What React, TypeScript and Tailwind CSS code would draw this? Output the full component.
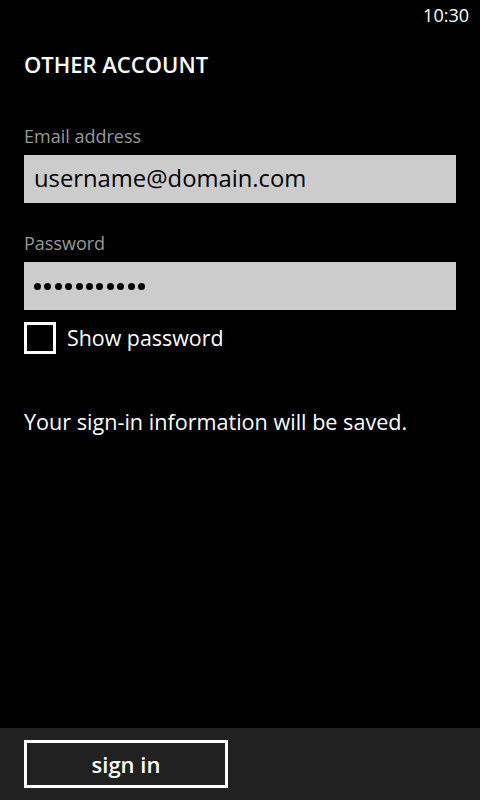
const font = { fontFamily: '"Open Sans", "Noto Sans", sans-serif' };

const Field = ({ label, children, mt }: { label: string; children: React.ReactNode; mt: string }) => (
  <div className={mt}>
    <div className="text-[18px] leading-[18px] text-[#999999]">{label}</div>
    <div className="mt-[10px] h-[48px] bg-[#cccccc] px-[10px] flex items-center text-[23.8px] text-black">
      {children}
    </div>
  </div>
);

export default function App() {
  return (
    <div className="h-[800px] w-[480px] bg-black text-white flex flex-col" style={font}>
      <div className="h-[30px] flex items-center justify-end pr-[11px] text-[18px] leading-none">10:30</div>

      <div className="flex-1 px-[24px]">
        <h1 className="mt-[23px] text-[22px] leading-[22px] font-semibold">OTHER ACCOUNT</h1>

        <Field label="Email address" mt="mt-[52px]">username@domain.com</Field>
        <Field label="Password" mt="mt-[31px]">
          <div className="flex gap-[3.4px]">
            {Array.from({ length: 11 }).map((_, i) => (
              <span key={i} className="w-[7px] h-[7px] rounded-full bg-black" />
            ))}
          </div>
        </Field>

        <label className="mt-[12px] flex items-center gap-[11px]">
          <span className="w-[32px] h-[32px] border-[3px] border-white" />
          <span className="text-[21.4px] leading-none">Show password</span>
        </label>

        <p className="mt-[57px] text-[21.6px] leading-none">Your sign-in information will be saved.</p>
      </div>

      <div className="h-[72px] bg-[#212121] px-[24px] pt-[12px]">
        <button className="w-[204px] h-[48px] border-[3px] border-white text-[22px] font-semibold leading-none">
          sign in
        </button>
      </div>
    </div>
  );
}
